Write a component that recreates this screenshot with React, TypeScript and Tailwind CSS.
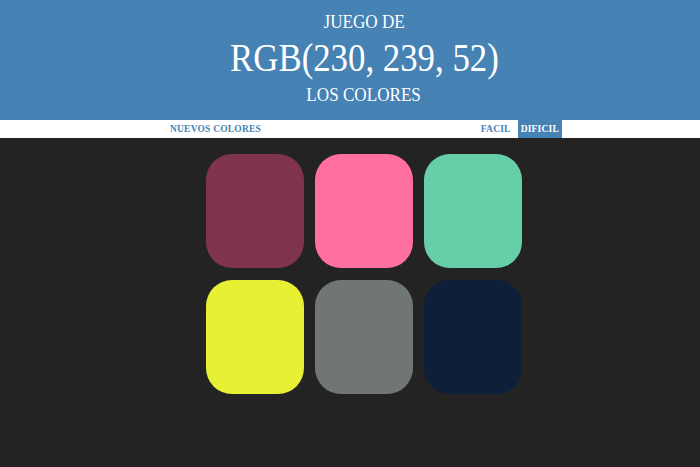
import React from 'react';

const colors = ['#7f344b', '#ff70a0', '#67cfa8', '#e8f034', '#707575', '#0c2039'];

const App = () => {
  return (
    <div className="w-[700px] h-[467px] bg-[#232323] font-['Liberation_Serif',serif] overflow-hidden">
      <div className="h-[120px] bg-[#4682b4] text-white flex flex-col items-center pt-[11px] pl-[28px]">
        <span className="text-[19px] leading-[22px] scale-x-[0.9]">JUEGO DE</span>
        <span className="text-[40px] leading-[48px] scale-x-[0.87] mt-[1px]">RGB(230, 239, 52)</span>
        <span className="text-[19px] leading-[22px] scale-x-[0.9] mt-[2px]">LOS COLORES</span>
      </div>
      <div className="h-[18px] bg-white flex items-stretch text-[9.5px] font-bold tracking-[0.2px] text-[#4682b4]">
        <span className="ml-[170px] flex items-center">NUEVOS COLORES</span>
        <span className="ml-auto flex items-center px-[7px]">FACIL</span>
        <span className="mr-[138px] flex items-center px-[3px] bg-[#4682b4] text-white">
          DIFICIL
        </span>
      </div>
      <div className="grid grid-cols-[repeat(3,98px)] gap-x-[11px] gap-y-[12px] justify-center pt-[16px] pl-[28px]">
        {colors.map((c) => (
          <div
            key={c}
            className="h-[114px] rounded-[26px]"
            style={{ backgroundColor: c }}
          />
        ))}
      </div>
    </div>
  );
};

export default App;
